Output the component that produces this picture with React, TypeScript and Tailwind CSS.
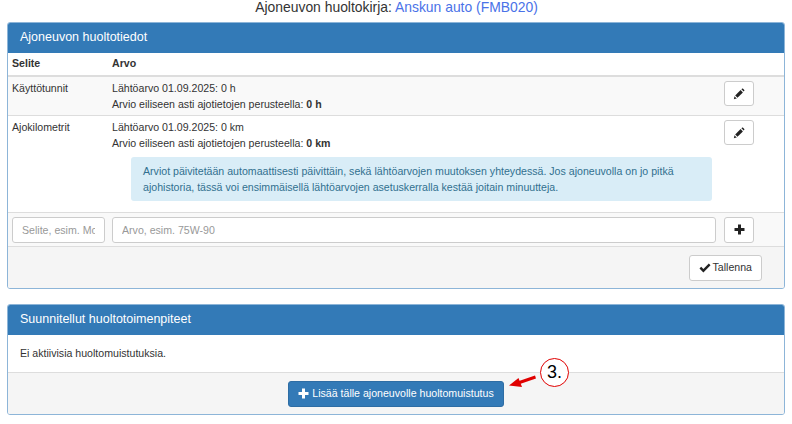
import React from 'react';

const PencilIcon = () => (
    <svg width="12" height="12" viewBox="0 0 12 12" className="block">
        <path d="M0.8 11.2 L1.5 8.2 L3.8 10.5 Z" fill="#333" />
        <path d="M2.2 7.5 L7.6 2.1 L9.9 4.4 L4.5 9.8 Z" fill="#222" />
        <path d="M8.4 1.3 L9.3 0.6 Q9.7 0.4 10.1 0.7 L11.3 1.9 Q11.6 2.3 11.3 2.7 L10.7 3.6 Z" fill="#222" />
    </svg>
);

const PlusIcon = ({ color }: { color: string }) => (
    <svg width="11" height="11" viewBox="0 0 11 11" className="block">
        <path d="M4 0.5 H7 V4 H10.5 V7 H7 V10.5 H4 V7 H0.5 V4 H4 Z" fill={color} />
    </svg>
);

const CheckIcon = () => (
    <svg width="12" height="10" viewBox="0 0 12 10" className="block">
        <path d="M0.5 5.4 L2.2 3.7 L4.4 5.9 L9.8 0.5 L11.5 2.2 L4.4 9.4 Z" fill="#222" />
    </svg>
);

const rows = [
    { label: 'Käyttötunnit', start: 'Lähtöarvo 01.09.2025: 0 h', estimate: '0 h' },
    { label: 'Ajokilometrit', start: 'Lähtöarvo 01.09.2025: 0 km', estimate: '0 km' }
];

const EditButton = () => (
    <button type="button" className="flex h-[25px] w-[30px] items-center justify-center rounded-[3px] border border-[#ccc] bg-white">
        <PencilIcon />
    </button>
);

const App = () => {
    return (
        <div className="relative h-[424px] w-[792px] overflow-hidden bg-white font-['Liberation_Sans',Arial,sans-serif] text-[10.6px] leading-[15.5px] text-[#333]">
            <h1 className="h-[22px] pl-[1px] text-center text-[13.9px] leading-[14px] font-normal text-[#333]">
                Ajoneuvon huoltokirja: <a className="text-[#4a72e8]">Anskun auto (FMB020)</a>
            </h1>

            <div className="mx-[7px] mb-[15px] overflow-hidden rounded-[3px] border border-[#8db5d8] bg-white">
                <div className="flex h-[30px] items-center bg-[#337ab7] px-3 text-[12.5px] text-white">Ajoneuvon huoltotiedot</div>
                <div className="flex h-[24px] items-center border-b-2 border-[#ddd] px-1 font-bold">
                    <span className="w-[100px]">Selite</span>
                    <span>Arvo</span>
                </div>
                {rows.map((row, i) => (
                    <div key={row.label} className={i === 0 ? 'flex h-[39px] border-b border-[#ddd] bg-[#f9f9f9] px-1 pt-[4px]' : 'flex h-[39px] px-1 pt-[4px]'}>
                        <span className="w-[100px]">{row.label}</span>
                        <div className="flex-1">
                            <p>{row.start}</p>
                            <p>Arvio eiliseen asti ajotietojen perusteella: <b>{row.estimate}</b></p>
                        </div>
                        <div className="mr-[26px] mt-[-1px] pt-[1px]">
                            <EditButton />
                        </div>
                    </div>
                ))}
                <div className="h-[57px] pl-[123px] pr-[72px] pt-[2px]">
                    <div className="h-[44px] rounded-[3px] bg-[#d9edf7] px-3 pt-[7px] text-[#31708f]">
                        Arviot päivitetään automaattisesti päivittäin, sekä lähtöarvojen muutoksen yhteydessä. Jos ajoneuvolla on jo pitkä ajohistoria, tässä voi ensimmäisellä lähtöarvojen asetuskerralla kestää joitain minuutteja.
                    </div>
                </div>
                <div className="flex h-[35px] items-center border-y border-[#ddd] bg-[#f9f9f9] pl-1 pr-[30px]">
                    <input placeholder="Selite, esim. Moottoriöljy" className="h-[26px] w-[93px] rounded-[3px] border border-[#ccc] bg-white px-[9px] text-[10.6px] placeholder:text-[#999]" />
                    <input placeholder="Arvo, esim. 75W-90" className="ml-[7px] h-[26px] flex-1 rounded-[3px] border border-[#ccc] bg-white px-[9px] text-[10.6px] placeholder:text-[#999]" />
                    <button type="button" className="ml-[8px] flex h-[26px] w-[30px] items-center justify-center rounded-[3px] border border-[#ccc] bg-white">
                        <PlusIcon color="#222" />
                    </button>
                </div>
                <div className="flex h-[41px] items-center justify-end bg-[#f5f5f5] pr-[22px]">
                    <button type="button" className="flex h-[26px] items-center gap-[2px] rounded-[3px] border border-[#ccc] bg-white px-[9px]">
                        <CheckIcon />
                        Tallenna
                    </button>
                </div>
            </div>

            <div className="mx-[7px] overflow-hidden rounded-[3px] border border-[#8db5d8] bg-white">
                <div className="flex h-[30px] items-center bg-[#337ab7] px-3 text-[12.5px] text-white">Suunnitellut huoltotoimenpiteet</div>
                <div className="flex h-[38px] items-center border-b border-[#ddd] px-3">Ei aktiivisia huoltomuistutuksia.</div>
                <div className="flex h-[41px] items-center justify-center bg-[#f5f5f5]">
                    <button type="button" className="flex h-[26px] items-center gap-[3px] rounded-[3px] border border-[#2e6da4] bg-[#337ab7] px-[9px] text-white">
                        <PlusIcon color="#fff" />
                        Lisää tälle ajoneuvolle huoltomuistutus
                    </button>
                </div>
            </div>

            {/* annotation */}
            <div className="absolute left-[540px] top-[358px] flex h-[29px] w-[29px] items-center justify-center rounded-full border-[1.5px] border-[#e00000] bg-white text-[18px] text-black">3.</div>
            <svg width="30" height="20" viewBox="0 0 30 20" className="absolute left-[508px] top-[375px]">
                <path d="M27.5 2 L10 8" stroke="#e00000" strokeWidth="3" fill="none" />
                <path d="M1 10.5 L10.5 3 L14 12 Z" fill="#e00000" />
            </svg>
        </div>
    );
};

export default App;
